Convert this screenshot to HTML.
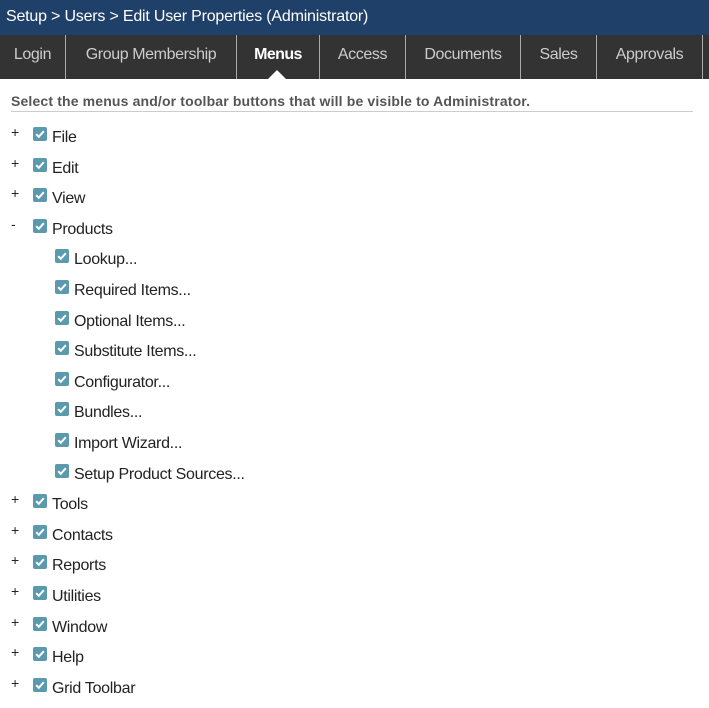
<!DOCTYPE html>
<html><head><style>
*{margin:0;padding:0;box-sizing:border-box}
body{width:709px;height:708px;background:#fff;font-family:"Liberation Sans",sans-serif;position:relative;overflow:hidden}
.hdr{position:absolute;left:0;top:0;width:709px;height:35px;background:#1f4068;color:#fff;font-size:16px;line-height:34px;padding-left:6px;letter-spacing:-0.2px}
.tabs{position:absolute;left:0;top:35px;width:709px;height:44px;background:#333}
.tab{position:absolute;top:0;height:44px;line-height:40px;color:#ccc;font-size:16px;text-align:center;border-right:1px solid #aaa;letter-spacing:-0.4px}
.tab.act{color:#fff;font-weight:bold;letter-spacing:-0.6px}
.tri{position:absolute;left:268px;top:70px;width:0;height:0;border-left:9px solid transparent;border-right:9px solid transparent;border-bottom:9px solid #fff}
.inst{position:absolute;left:11px;top:93px;font-size:14px;font-weight:bold;color:#555;letter-spacing:0.15px}
.rule{position:absolute;left:11px;top:111px;width:682px;height:1px;background:#ccc}
.row{position:absolute;height:20px;font-size:16px;color:#222;line-height:20px;letter-spacing:-0.3px}
.row .pm{position:absolute;left:-22px;top:-4px;font-size:14px;color:#222}
.cb{position:absolute;left:0;top:1px;width:14px;height:14px;background:#5b9aad;border-radius:2px}
.cb svg{position:absolute;left:0;top:0}
.row span.t{position:absolute;left:19px;top:2px;white-space:nowrap}
</style></head><body>
<div class="hdr">Setup &gt; Users &gt; Edit User Properties (Administrator)</div>
<div class="tabs">
<div class="tab" style="left:0;width:66px">Login</div>
<div class="tab" style="left:66px;width:171px">Group Membership</div>
<div class="tab act" style="left:237px;width:83px">Menus</div>
<div class="tab" style="left:320px;width:86px">Access</div>
<div class="tab" style="left:406px;width:115px">Documents</div>
<div class="tab" style="left:521px;width:76px">Sales</div>
<div class="tab" style="left:597px;width:106px">Approvals</div>
</div>
<div class="tri"></div>
<div class="inst">Select the menus and/or toolbar buttons that will be visible to Administrator.</div>
<div class="rule"></div>
<div id="list"></div>
<script>
var items=[["+",0,"File"],["+",0,"Edit"],["+",0,"View"],["-",0,"Products"],["",1,"Lookup..."],["",1,"Required Items..."],["",1,"Optional Items..."],["",1,"Substitute Items..."],["",1,"Configurator..."],["",1,"Bundles..."],["",1,"Import Wizard..."],["",1,"Setup Product Sources..."],["+",0,"Tools"],["+",0,"Contacts"],["+",0,"Reports"],["+",0,"Utilities"],["+",0,"Window"],["+",0,"Help"],["+",0,"Grid Toolbar"]];
var h="";
items.forEach(function(it,i){
var y=Math.round(136+i*30.6)-10;var x=it[1]?55:33;
h+='<div class="row" style="left:'+x+'px;top:'+y+'px">'+(it[0]?'<span class="pm">'+it[0]+'</span>':'')+'<div class="cb"><svg width="14" height="14" viewBox="0 0 14 14"><path d="M3.2 7.2 L5.8 9.8 L10.8 4.2" stroke="#fff" stroke-width="2" fill="none"/></svg></div><span class="t">'+it[2]+'</span></div>';
});
document.getElementById("list").innerHTML=h;
</script>
</body></html>
